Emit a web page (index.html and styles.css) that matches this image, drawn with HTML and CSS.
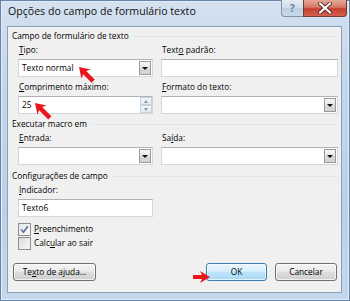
FILE: index.html
```html
<!DOCTYPE html>
<html>
<head>
<meta charset="utf-8">
<link rel="stylesheet" href="styles.css">
</head>
<body>
<div class="window">
  <div class="titlebar">
    <span class="title">Opções do campo de formulário texto</span>
    <div class="caption">
      <div class="cap-help">?</div>
      <div class="cap-close">
        <svg width="14" height="12" viewBox="0 0 14 12"><path d="M2 1.5 L12 10.5 M12 1.5 L2 10.5" stroke="#5a2a2a" stroke-width="4" stroke-linecap="round"/><path d="M2 1.5 L12 10.5 M12 1.5 L2 10.5" stroke="#ffffff" stroke-width="2.2" stroke-linecap="round"/></svg>
      </div>
    </div>
  </div>
  <div class="client">
    <div class="group-head"><span>Campo de formulário de texto</span></div>
    <div class="grid">
      <div class="field">
        <div class="lbl"><u>T</u>ipo:</div>
        <div class="box combo"><span class="val">Texto normal</span><span class="dd"><i></i></span></div>
      </div>
      <div class="field">
        <div class="lbl">Text<u>o</u> padrão:</div>
        <div class="box"></div>
      </div>
      <div class="field">
        <div class="lbl"><u>C</u>omprimento máximo:</div>
        <div class="box combo"><span class="val">25</span><span class="spin"><span class="up"><i></i></span><span class="down"><i></i></span></span></div>
      </div>
      <div class="field">
        <div class="lbl"><u>F</u>ormato do texto:</div>
        <div class="box combo"><span class="val"></span><span class="dd"><i></i></span></div>
      </div>
    </div>
    <div class="group-head gh2"><span>Executar macro em</span></div>
    <div class="grid">
      <div class="field">
        <div class="lbl"><u>E</u>ntrada:</div>
        <div class="box combo"><span class="val"></span><span class="dd"><i></i></span></div>
      </div>
      <div class="field">
        <div class="lbl">Sa<u>í</u>da:</div>
        <div class="box combo"><span class="val"></span><span class="dd"><i></i></span></div>
      </div>
    </div>
    <div class="group-head gh3"><span>Configurações de campo</span></div>
    <div class="grid">
      <div class="field">
        <div class="lbl"><u>I</u>ndicador:</div>
        <div class="box"><span class="val">Texto6</span></div>
      </div>
    </div>
    <div class="checks">
      <div class="check"><span class="cb checked"><svg width="9" height="9" viewBox="0 0 9 9"><path d="M1.2 4.5 L3.5 7.2 L7.8 1.2" fill="none" stroke="#5a6f90" stroke-width="1.6"/></svg></span><span><u>P</u>reenchimento</span></div>
      <div class="check"><span class="cb"></span><span>Calc<u>u</u>lar ao sair</span></div>
    </div>
    <div class="buttons">
      <div class="btn help-btn">Te<u>x</u>to de ajuda...</div>
      <div class="right-btns">
        <div class="btn ok">OK</div>
        <div class="btn cancel">Cancelar</div>
      </div>
    </div>
  </div>
  <svg class="arrows" width="350" height="301" viewBox="0 0 350 301">
    <path transform="translate(79,67) rotate(225)" d="M0 0 L-10 -6.5 L-8 -2.2 L-20 -2.2 L-20 2.2 L-8 2.2 L-10 6.5 Z" fill="#e8161c"/>
    <path transform="translate(35,103) rotate(225)" d="M0 0 L-10 -6.5 L-8 -2.2 L-21 -2.2 L-21 2.2 L-8 2.2 L-10 6.5 Z" fill="#e8161c"/>
    <path transform="translate(210,277)" d="M0 0 L-10 -6 L-8 -2 L-17 -2 L-17 2 L-8 2 L-10 6 Z" fill="#e8161c"/>
  </svg>
</div>
</body>
</html>
```

FILE: styles.css
```css
body {
  margin: 0;
  font-family: "Open Sans", "Noto Sans", sans-serif;
  font-size: 8.3px;
  color: #000;
}

.window {
  position: relative;
  width: 350px;
  height: 301px;
  box-sizing: border-box;
  padding: 0 8px 8px 7px;
  display: flex;
  flex-direction: column;
  background: linear-gradient(180deg, #d3e1f0 0%, #c4d6ea 30%, #bcd0e7 70%, #c6d8eb 100%);
  box-shadow: inset 0 0 0 1px #6584ab, inset 0 0 0 2px #e4edf6;
}

.titlebar {
  height: 26px;
  display: flex;
  align-items: flex-start;
  flex-shrink: 0;
}

.title {
  margin-top: 4px;
  padding-left: 1px;
  font-size: 10.6px;
  line-height: 15px;
  color: #111;
  white-space: nowrap;
}

.caption {
  margin-left: auto;
  margin-right: -5px;
  display: flex;
}

.cap-help {
  width: 22px;
  height: 17px;
  box-sizing: border-box;
  border: 1px solid #7d93ad;
  border-top: none;
  border-right: none;
  border-radius: 0 0 0 4px;
  background: linear-gradient(180deg, #e4edf6 0%, #cddcec 50%, #bccfe3 50%, #c8d9ea 100%);
  color: #6c7d92;
  font-size: 10px;
  font-weight: bold;
  line-height: 16px;
  text-align: center;
}

.cap-close {
  width: 44px;
  height: 17px;
  box-sizing: border-box;
  border: 1px solid #7a3a30;
  border-top: none;
  border-radius: 0 0 4px 0;
  background: linear-gradient(180deg, #e8a898 0%, #d47868 45%, #c5402f 55%, #d2614e 100%);
  display: flex;
  align-items: center;
  justify-content: center;
}

.client {
  flex: 1;
  box-sizing: border-box;
  background: #f0f0f0;
  border: 1px solid #8a9fba;
  padding: 2px 3px 0 4px;
  display: flex;
  flex-direction: column;
}

.group-head {
  display: flex;
  align-items: center;
  line-height: 14px;
  height: 14px;
  white-space: nowrap;
}

.group-head::after {
  content: "";
  flex: 1;
  height: 1px;
  margin-left: 4px;
  background: #e2e6ea;
}

.gh2 { margin-top: 3px; }
.gh3 { margin-top: 4px; }

.grid {
  display: grid;
  grid-template-columns: 135px 177px;
  column-gap: 8px;
  row-gap: 3px;
  margin-left: 6px;
}

.lbl {
  line-height: 14px;
  height: 14px;
  padding-left: 1px;
  margin-bottom: 2px;
  white-space: nowrap;
}

.box {
  height: 18px;
  box-sizing: border-box;
  background: #fff;
  border: 1px solid #d3d6dc;
  border-top-color: #aeb1b8;
  position: relative;
  display: flex;
  align-items: center;
}

.val {
  flex: 1;
  padding-left: 3px;
  line-height: 16px;
}

.dd {
  width: 12px;
  height: 14px;
  margin-right: 1px;
  box-sizing: border-box;
  border: 1px solid #9a9a9a;
  background: linear-gradient(180deg, #f6f6f6 0%, #e6e6e6 50%, #d9d9d9 51%, #d2d2d2 100%);
  display: flex;
  align-items: center;
  justify-content: center;
}

.dd i {
  width: 0;
  height: 0;
  border-left: 3px solid transparent;
  border-right: 3px solid transparent;
  border-top: 3px solid #111;
}

.spin {
  width: 12px;
  height: 16px;
  display: flex;
  flex-direction: column;
}

.spin span {
  flex: 1;
  box-sizing: border-box;
  border: 1px solid #c8d2dd;
  background: linear-gradient(180deg, #f4f7fa, #e2e9f0);
  display: flex;
  align-items: center;
  justify-content: center;
}

.spin .up i {
  border-left: 2.5px solid transparent;
  border-right: 2.5px solid transparent;
  border-bottom: 3px solid #8898a8;
}

.spin .down i {
  border-left: 2.5px solid transparent;
  border-right: 2.5px solid transparent;
  border-top: 3px solid #8898a8;
}

.checks {
  margin-top: 5px;
  margin-left: 6px;
  display: flex;
  flex-direction: column;
}

.check {
  display: flex;
  align-items: center;
  height: 14px;
  line-height: 14px;
  gap: 3px;
  white-space: nowrap;
}

.cb {
  width: 13px;
  height: 13px;
  box-sizing: border-box;
  border: 1px solid #8e8f8f;
  background: linear-gradient(135deg, #dcdcdc 0%, #f6f6f6 100%);
  display: flex;
  align-items: center;
  justify-content: center;
}

.cb.checked {
  background: linear-gradient(135deg, #e2e6ea 0%, #fafbfc 100%);
}

.buttons {
  margin-top: 13px;
  display: flex;
  justify-content: space-between;
  padding: 0 1px;
}

.right-btns {
  display: flex;
  gap: 8px;
}

.btn {
  height: 18px;
  box-sizing: border-box;
  border: 1px solid #707070;
  border-radius: 3px;
  background: linear-gradient(180deg, #f4f4f4 0%, #ebebeb 45%, #dddddd 50%, #cfcfcf 100%);
  line-height: 16px;
  text-align: center;
  white-space: nowrap;
  box-shadow: inset 0 0 0 1px rgba(255,255,255,0.7);
}

.help-btn { width: 83px; }
.ok {
  width: 61px;
  border-color: #3c7fb1;
  background: linear-gradient(180deg, #e9f5fc 0%, #d9effc 45%, #bee6fd 50%, #a8d8f3 100%);
}
.cancel { width: 62px; }

.arrows {
  position: absolute;
  left: 0;
  top: 0;
  pointer-events: none;
}
```
